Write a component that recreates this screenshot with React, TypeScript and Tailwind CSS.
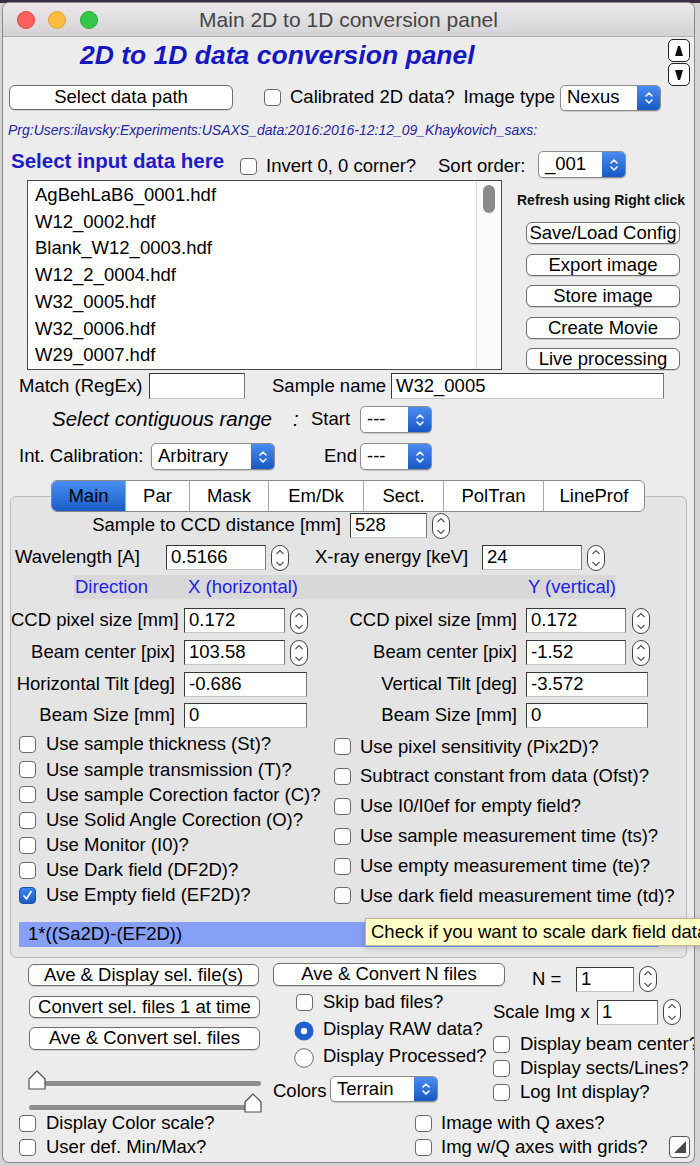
import React from "react";

type P = { cls?: string; children?: React.ReactNode };

function Btn({ cls = "", children }: P) {
  return (
    <div
      className={
        "flex shrink-0 items-center justify-center overflow-hidden whitespace-nowrap rounded-[6px] border border-[#6f6f6f] bg-white shadow-[0_1px_0_rgba(0,0,0,0.12)] " +
        cls
      }
    >
      {children}
    </div>
  );
}

function Check({ cls = "", on = false }: { cls?: string; on?: boolean }) {
  if (on) {
    return (
      <span
        className={
          "flex h-[17px] w-[17px] shrink-0 items-center justify-center rounded-[4px] border border-[#1a4fa8] bg-gradient-to-b from-[#3f86f0] to-[#1b5cc6] " +
          cls
        }
      >
        <svg width="11" height="11" viewBox="0 0 11 11">
          <path d="M2 6 L4.5 8.8 L9 1.8" fill="none" stroke="white" strokeWidth="1.8" strokeLinecap="round" strokeLinejoin="round" />
        </svg>
      </span>
    );
  }
  return <span className={"h-[17px] w-[17px] shrink-0 rounded-[4px] border border-[#6b6b6b] bg-white " + cls} />;
}

function Radio({ cls = "", on = false }: { cls?: string; on?: boolean }) {
  return (
    <svg className={"shrink-0 " + cls} width="20" height="20" viewBox="0 0 20 20">
      {on ? (
        <>
          <circle cx="10" cy="10" r="9.5" fill="#1e60cc" />
          <circle cx="10" cy="10" r="3.2" fill="white" />
        </>
      ) : (
        <circle cx="10" cy="10" r="9.3" fill="white" stroke="#6b6b6b" strokeWidth="1" />
      )}
    </svg>
  );
}

function Pop({ cls = "", label }: { cls?: string; label: string }) {
  return (
    <div className={"flex shrink-0 overflow-hidden rounded-[5px] border border-[#8e8e8e] bg-white shadow-[0_1px_1px_rgba(0,0,0,0.15)] " + cls}>
      <div className="flex flex-1 items-center pl-[6px] whitespace-nowrap">{label}</div>
      <div className="flex w-[23px] items-center justify-center bg-gradient-to-b from-[#4a8cf0] to-[#1658c4]">
        <svg width="10" height="16" viewBox="0 0 10 16" fill="none" stroke="white" strokeWidth="1.6" strokeLinecap="round" strokeLinejoin="round">
          <path d="M2 6 L5 3 L8 6" />
          <path d="M2 10 L5 13 L8 10" />
        </svg>
      </div>
    </div>
  );
}

function Field({ cls = "", value = "" }: { cls?: string; value?: string }) {
  return (
    <div
      className={
        "flex h-[25px] shrink-0 items-center whitespace-nowrap border border-[#3a3a3a] border-r-[#7a7a7a] border-b-[#c4c4c4] bg-white pl-[4px] " +
        cls
      }
    >
      {value}
    </div>
  );
}

function Stepper({ cls = "" }: { cls?: string }) {
  return (
    <svg className={"shrink-0 " + cls} width="18" height="26" viewBox="0 0 18 26">
      <rect x="0.5" y="0.5" width="17" height="25" rx="8.5" fill="white" stroke="#444" />
      <path d="M5.5 9 L9 5.5 L12.5 9" fill="none" stroke="#555" strokeWidth="1.2" />
      <path d="M5.5 17 L9 20.5 L12.5 17" fill="none" stroke="#555" strokeWidth="1.2" />
    </svg>
  );
}

const files = [
  "AgBehLaB6_0001.hdf",
  "W12_0002.hdf",
  "Blank_W12_0003.hdf",
  "W12_2_0004.hdf",
  "W32_0005.hdf",
  "W32_0006.hdf",
  "W29_0007.hdf",
];

const tabs = [
  { t: "Main", w: "w-[73px]" },
  { t: "Par", w: "w-[64px]" },
  { t: "Mask", w: "w-[79px]" },
  { t: "Em/Dk", w: "w-[95px]" },
  { t: "Sect.", w: "w-[80px]" },
  { t: "PolTran", w: "w-[100px]" },
  { t: "LineProf", w: "w-[101px]" },
];

const leftChecks = [
  "Use sample thickness (St)?",
  "Use sample transmission (T)?",
  "Use sample Corection factor (C)?",
  "Use Solid Angle Corection (O)?",
  "Use Monitor (I0)?",
  "Use Dark field (DF2D)?",
  "Use Empty field (EF2D)?",
];

const rightChecks = [
  "Use pixel sensitivity (Pix2D)?",
  "Subtract constant from data (Ofst)?",
  "Use I0/I0ef for empty field?",
  "Use sample measurement time (ts)?",
  "Use empty measurement time (te)?",
  "Use dark field measurement time (td)?",
];

function Slider({ thumbAt }: { thumbAt: "left" | "right" }) {
  const x = thumbAt === "left" ? 1 : 217;
  return (
    <svg width="238" height="22" viewBox="0 0 238 22">
      {thumbAt === "left" ? (
        <rect x="10" y="12" width="224" height="5" rx="2.5" fill="#8e8e8e" />
      ) : (
        <rect x="2" y="13" width="222" height="5" rx="2.5" fill="#8e8e8e" />
      )}
      <path
        d={`M${x + 1} 20 L${x + 1} 10 L${x + 9} 2 L${x + 17} 10 L${x + 17} 20 Z`}
        fill="white"
        stroke="#4e4e4e"
        strokeWidth="1.2"
        strokeLinejoin="round"
      />
    </svg>
  );
}

function ParamRow({ l1, v1, l2, v2, wide = false, cls = "" }: { l1: string; v1: string; l2: string; v2: string; wide?: boolean; cls?: string }) {
  return (
    <div className={"flex h-[25px] items-center " + cls}>
      <div className="w-[164px] shrink-0 text-right whitespace-nowrap">{l1}</div>
      {wide ? (
        <>
          <Field cls="ml-[9px] w-[123px]" value={v1} />
          <div className="w-[210px] shrink-0 text-right whitespace-nowrap">{l2}</div>
          <Field cls="ml-[9px] w-[122px]" value={v2} />
        </>
      ) : (
        <>
          <Field cls="ml-[9px] w-[101px]" value={v1} />
          <Stepper cls="ml-[5px]" />
          <div className="w-[209px] shrink-0 text-right whitespace-nowrap">{l2}</div>
          <Field cls="ml-[9px] w-[100px]" value={v2} />
          <Stepper cls="ml-[6px]" />
        </>
      )}
    </div>
  );
}

export default function App() {
  return (
    <div className="relative h-[1166px] w-[700px] overflow-hidden bg-[#d4d4d4] font-['Liberation_Sans',Arial,sans-serif] text-[18.5px] leading-none text-black">
      <div className="h-[3px] bg-[#3a2f44]" />
      <div className="ml-[3px] flex h-[1159px] w-[691px] flex-col overflow-hidden rounded-[6px] bg-[#ececec] shadow-[0_0_0_1px_#8a8a8a]">
        {/* title bar */}
        <div className="grid h-[34px] shrink-0 grid-cols-[1fr_auto_1fr] items-center border-b border-[#b3b3b3] bg-gradient-to-b from-[#ebe9eb] to-[#d4d2d4]">
          <div className="flex items-center gap-[13.5px] pl-[13.5px]">
            <span className="h-[18px] w-[18px] rounded-full border border-[#e0443e] bg-[#fc605c]" />
            <span className="h-[18px] w-[18px] rounded-full border border-[#dea236] bg-[#fdbc40]" />
            <span className="h-[18px] w-[18px] rounded-full border border-[#27aa35] bg-[#34c84a]" />
          </div>
          <div className="text-[21px] text-[#454545]">Main 2D to 1D conversion panel</div>
          <div />
        </div>

        {/* content */}
        <div className="flex flex-col">
          <div className="flex">
            <div className="flex w-[658px] shrink-0 flex-col">
              <div className="flex h-[36px] items-center pl-[77px] text-[26.5px] font-bold italic text-[#1717c2]">
                2D to 1D data conversion panel
              </div>
              <div className="mt-[11px] flex h-[27px] items-center">
                <Btn cls="ml-[6px] h-[25px] w-[224px]">Select data path</Btn>
                <Check cls="ml-[31px]" />
                <span className="ml-[9px] whitespace-nowrap">Calibrated 2D data?</span>
                <span className="ml-auto mr-[5px] whitespace-nowrap">Image type</span>
                <Pop cls="h-[26px] w-[101px]" label="Nexus" />
              </div>
            </div>
            <div className="ml-[7px] mt-[2px] flex flex-col gap-[1px]">
              <div className="flex h-[23px] w-[22px] items-center justify-center rounded-[5px] border-[1.5px] border-[#222] bg-white">
                <svg width="10" height="12" viewBox="0 0 10 12">
                  <path d="M1 11 L4 1 L6 1 L9 11 Z" fill="#111" />
                </svg>
              </div>
              <div className="flex h-[23px] w-[22px] items-center justify-center rounded-[5px] border-[1.5px] border-[#222] bg-white">
                <svg width="10" height="12" viewBox="0 0 10 12">
                  <path d="M1 1 L9 1 L6 11 L4 11 Z" fill="#111" />
                </svg>
              </div>
            </div>
          </div>

          <div className="mt-[11px] flex h-[16px] items-center pl-[5px] text-[14px] italic whitespace-nowrap text-[#25259e]">
            Prg:Users:ilavsky:Experiments:USAXS_data:2016:2016-12:12_09_Khaykovich_saxs:
          </div>

          <div className="mt-[13px] flex h-[27px] items-center">
            <div className="mb-[7px] ml-[8px] w-[229px] shrink-0 text-[20.5px] font-bold whitespace-nowrap text-[#1c1cc8]">Select input data here</div>
            <Check cls="mt-[3px]" />
            <div className="ml-[9px] mt-[3px] w-[172px] shrink-0 whitespace-nowrap">Invert 0, 0 corner?</div>
            <div className="mt-[3px] w-[100px] shrink-0 whitespace-nowrap">Sort order:</div>
            <Pop cls="h-[27px] w-[88px]" label="_001" />
          </div>

          <div className="mt-[2px] flex">
            <div className="ml-[24px] flex h-[190px] w-[475px] shrink-0 border border-[#4a4a4a] bg-white">
              <div className="flex-1 pl-[7px] pt-[1px]">
                {files.map((f) => (
                  <div key={f} className="flex h-[26.7px] items-center whitespace-nowrap">
                    {f}
                  </div>
                ))}
              </div>
              <div className="flex w-[25px] justify-center border-l border-[#d6d6d6] bg-[#fbfbfb] pt-[4px]">
                <div className="h-[28px] w-[12px] rounded-full bg-[#8b8b8b]" />
              </div>
            </div>
            <div className="ml-[15px] flex flex-col">
              <div className="flex h-[40px] items-center text-[14px] font-bold whitespace-nowrap text-[#111]">Refresh using Right click</div>
              <Btn cls="ml-[9px] mt-[2px] h-[22px] w-[154px]">Save/Load Config</Btn>
              <Btn cls="ml-[9px] mt-[10px] h-[22px] w-[154px]">Export image</Btn>
              <Btn cls="ml-[9px] mt-[9px] h-[22px] w-[154px]">Store image</Btn>
              <Btn cls="ml-[9px] mt-[10px] h-[22px] w-[154px]">Create Movie</Btn>
              <Btn cls="ml-[9px] mt-[9px] h-[22px] w-[154px]">Live processing</Btn>
            </div>
          </div>

          <div className="mt-[3px] flex h-[26px] items-center">
            <div className="ml-[16px] w-[130px] shrink-0 whitespace-nowrap">Match (RegEx)</div>
            <Field cls="h-[26px] w-[96px]" />
            <div className="ml-[27px] w-[119px] shrink-0 whitespace-nowrap">Sample name</div>
            <Field cls="h-[26px] w-[273px]" value="W32_0005" />
          </div>

          <div className="mt-[7px] flex h-[27px] items-center">
            <div className="ml-[49px] w-[241px] shrink-0 text-[20.5px] italic whitespace-nowrap">Select contiguous range</div>
            <div className="w-[18px] shrink-0 text-[20.5px] italic">:</div>
            <div className="w-[49px] shrink-0 whitespace-nowrap">Start</div>
            <Pop cls="h-[27px] w-[72px]" label="---" />
          </div>

          <div className="mt-[10px] flex h-[27px] items-center">
            <div className="ml-[16px] w-[132px] shrink-0 whitespace-nowrap">Int. Calibration:</div>
            <Pop cls="h-[27px] w-[124px]" label="Arbitrary" />
            <div className="ml-[49px] w-[36px] shrink-0 whitespace-nowrap">End</div>
            <Pop cls="h-[27px] w-[72px]" label="---" />
          </div>

          {/* tabs */}
          <div className="relative z-10 ml-[48px] mt-[10px] flex h-[32px] w-fit overflow-hidden rounded-[6px] border border-[#8a8a8a] bg-white">
            {tabs.map((t, i) => (
              <div
                key={t.t}
                className={
                  "flex items-center justify-center " +
                  t.w +
                  (i === 0 ? " bg-gradient-to-b from-[#4b8ff2] to-[#1a5cc7]" : " border-l border-[#a9a9a9]")
                }
              >
                {t.t}
              </div>
            ))}
          </div>

          <div className="-mt-[16px] ml-[7px] flex h-[462px] w-[677px] flex-col rounded-[6px] border border-[#bcbcbc] bg-[#e4e4e4] pt-[16px]">
            <div className="flex h-[25px] items-center">
              <div className="w-[330px] shrink-0 text-right whitespace-nowrap">Sample to CCD distance [mm]</div>
              <Field cls="ml-[9px] w-[77px]" value="528" />
              <Stepper cls="ml-[5px]" />
            </div>
            <div className="mt-[7px] flex h-[25px] items-center">
              <div className="w-[155px] shrink-0 pl-[4px] whitespace-nowrap">Wavelength [A]</div>
              <Field cls="w-[100px]" value="0.5166" />
              <Stepper cls="ml-[5px]" />
              <div className="w-[193px] shrink-0 pl-[26px] whitespace-nowrap">X-ray energy [keV]</div>
              <Field cls="w-[100px]" value="24" />
              <Stepper cls="ml-[5px]" />
            </div>
            <div className="ml-[63px] mt-[5px] flex h-[24px] w-[542px] items-center bg-[#d8d8d8] text-[#2121e6]">
              <div className="w-[114px] shrink-0 pl-[1px]">Direction</div>
              <div className="flex-1">X (horizontal)</div>
              <div>Y (vertical)</div>
            </div>
            <ParamRow cls="mt-[9px]" l1="CCD pixel size [mm]" v1="0.172" l2="CCD pixel size [mm]" v2="0.172" />
            <ParamRow cls="mt-[7px]" l1="Beam center [pix]" v1="103.58" l2="Beam center [pix]" v2="-1.52" />
            <ParamRow cls="mt-[7px]" wide l1="Horizontal Tilt [deg]" v1="-0.686" l2="Vertical Tilt [deg]" v2="-3.572" />
            <ParamRow cls="mt-[6px]" wide l1="Beam Size [mm]" v1="0" l2="Beam Size [mm]" v2="0" />

            <div className="mt-[4px] flex">
              <div className="w-[323px] shrink-0 pl-[8px]">
                {leftChecks.map((c, i) => (
                  <div key={c} className="flex h-[25.2px] items-center whitespace-nowrap">
                    <Check on={i === 6} />
                    <span className="ml-[10px]">{c}</span>
                  </div>
                ))}
              </div>
              <div>
                {rightChecks.map((c) => (
                  <div key={c} className="flex h-[29.8px] items-center whitespace-nowrap">
                    <Check />
                    <span className="ml-[9px]">{c}</span>
                  </div>
                ))}
              </div>
            </div>

            <div className="ml-[8px] mt-[11px] flex h-[25px] w-[640px] items-center bg-[#869ff7] pl-[9px]">1*((Sa2D)-(EF2D))</div>
          </div>

          {/* lower controls */}
          <div className="mt-[2px] flex h-[152px]">
            <div className="flex w-[270px] shrink-0 flex-col pl-[25px]">
              <Btn cls="mt-[4px] h-[22px] w-[231px]">Ave &amp; Display sel. file(s)</Btn>
              <Btn cls="ml-[1px] mt-[10px] h-[22px] w-[231px]">Convert sel. files 1 at time</Btn>
              <Btn cls="ml-[1px] mt-[9px] h-[23px] w-[231px]">Ave &amp; Convert sel. files</Btn>
              <div className="-ml-[1px] mt-[19px]">
                <Slider thumbAt="left" />
              </div>
              <div className="-ml-[1px] mt-[1px]">
                <Slider thumbAt="right" />
              </div>
            </div>
            <div className="flex w-[220px] shrink-0 flex-col">
              <Btn cls="mt-[3px] h-[23px] w-[232px]">Ave &amp; Convert N files</Btn>
              <div className="mt-[6px] flex h-[20px] items-center whitespace-nowrap">
                <Check cls="ml-[23px]" />
                <span className="ml-[10px]">Skip bad files?</span>
              </div>
              <div className="mt-[5px] flex h-[27px] items-center whitespace-nowrap">
                <Radio cls="ml-[21px]" on />
                <span className="ml-[9px] mb-[2px]">Display RAW data?</span>
              </div>
              <div className="flex h-[27px] items-center whitespace-nowrap">
                <Radio cls="ml-[21px]" />
                <span className="ml-[9px] mb-[2px]">Display Processed?</span>
              </div>
              <div className="mt-[5px] flex h-[26px] items-center">
                <div className="mt-[5px] w-[57px] shrink-0">Colors</div>
                <Pop cls="h-[26px] w-[108px]" label="Terrain" />
              </div>
            </div>
            <div className="flex w-[201px] shrink-0 flex-col">
              <div className="mt-[6px] flex h-[26px] items-center">
                <div className="w-[83px] shrink-0 pl-[39px] whitespace-nowrap">N =</div>
                <Field cls="w-[58px]" value="1" />
                <Stepper cls="ml-[5px]" />
              </div>
              <div className="mt-[7px] flex h-[26px] items-center">
                <div className="w-[104px] shrink-0 whitespace-nowrap">Scale Img x</div>
                <Field cls="w-[61px]" value="1" />
                <Stepper cls="ml-[5px]" />
              </div>
              <div className="mt-[7px]">
                {["Display beam center?", "Display sects/Lines?", "Log Int display?"].map((c) => (
                  <div key={c} className="flex h-[24px] items-center whitespace-nowrap">
                    <Check />
                    <span className="ml-[10px]">{c}</span>
                  </div>
                ))}
              </div>
            </div>
          </div>

          <div className="flex h-[23px] items-center whitespace-nowrap">
            <Check cls="ml-[16px]" />
            <span className="ml-[10px] w-[369px] shrink-0">Display Color scale?</span>
            <Check />
            <span className="ml-[9px]">Image with Q axes?</span>
          </div>
          <div className="flex h-[24px] items-center whitespace-nowrap">
            <Check cls="ml-[16px]" />
            <span className="ml-[10px] w-[369px] shrink-0">User def. Min/Max?</span>
            <Check />
            <span className="ml-[9px]">Img w/Q axes with grids?</span>
            <div className="ml-auto mr-[4px] flex h-[22px] w-[21px] items-center justify-center rounded-[4px] border border-[#555] bg-white">
              <svg width="14" height="14" viewBox="0 0 14 14">
                <path d="M1 13 L13 1 L13 13 Z" fill="#4a4a4a" />
              </svg>
            </div>
          </div>
        </div>
      </div>

      {/* tooltip */}
      <div className="absolute left-[365px] top-[918px] flex h-[28px] w-[360px] items-center border border-[#b9b98f] bg-[#ffffc7] pl-[5px] whitespace-nowrap shadow-[0_2px_6px_rgba(0,0,0,0.18)]">
        Check if you want to scale dark field data
      </div>
    </div>
  );
}
